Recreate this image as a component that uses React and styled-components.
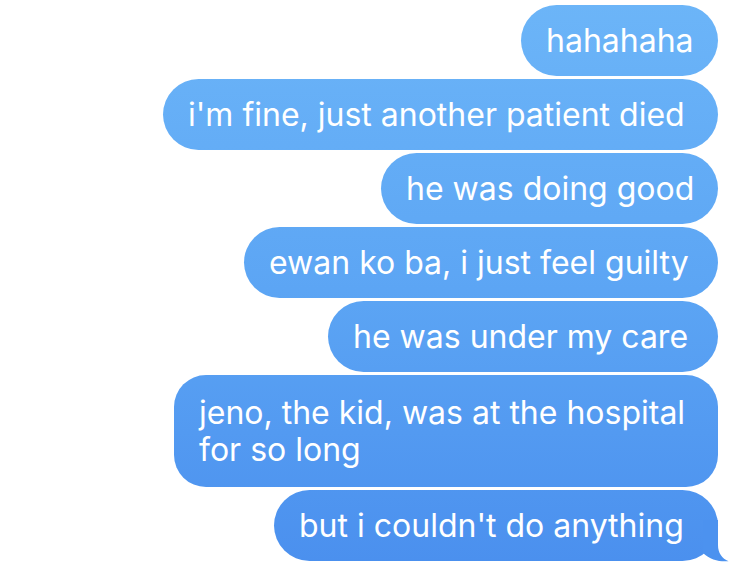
import React from 'react'
import styled, { createGlobalStyle } from 'styled-components'

const messages = [
    { id: 1, width: 197, text: 'hahahaha' },
    { id: 2, width: 555, text: "i'm fine, just another patient died" },
    { id: 3, width: 337, text: 'he was doing good' },
    { id: 4, width: 474, text: 'ewan ko ba, i just feel guilty' },
    { id: 5, width: 390, text: 'he was under my care' },
    { id: 6, width: 544, lines: ['jeno, the kid, was at the hospital', 'for so long'] },
    { id: 7, width: 444, text: "but i couldn't do anything", tail: true },
]

function Tail() {
    return (
        <TailSvg width="32" height="42" viewBox="0 0 32 42">
            <path
                d="M20 0 L20 25 C20 33 24 38.5 30.5 41.2 C22 42 12 40 5 33 L5 0 Z"
                fill="#4c92ef"
            />
        </TailSvg>
    )
}

function App() {
    return (
        <>
            <GlobalStyle />
            <Thread>
                {messages.map(msg => (
                    <Bubble key={msg.id} $w={msg.width} $multi={!!msg.lines}>
                        {msg.lines
                            ? msg.lines.map((line, i) => (
                                <React.Fragment key={i}>
                                    {i > 0 && <br />}
                                    {line}
                                </React.Fragment>
                            ))
                            : msg.text}
                        {msg.tail && <Tail />}
                    </Bubble>
                ))}
            </Thread>
        </>
    )
}

export default App

const GlobalStyle = createGlobalStyle`
    html, body {
        margin: 0;
        padding: 0;
        background: #ffffff;
    }
    body {
        width: 750px;
        height: 574px;
        overflow: hidden;
    }
`

const Thread = styled.div`
    display: flex;
    flex-direction: column;
    align-items: flex-end;
    gap: 3px;
    padding: 5px 32px 0 0;
    font-family: Inter, "Open Sans", sans-serif;
`

const Bubble = styled.div`
    position: relative;
    box-sizing: border-box;
    width: ${p => p.$w}px;
    background: linear-gradient(180deg, #6cb5f8 0px, #5ca5f4 290px, #4a8fee 574px) fixed;
    color: #ffffff;
    font-size: 32px;
    line-height: 37px;
    padding: ${p => (p.$multi ? '19px 25px' : '17px 25px')};
    border-radius: ${p => (p.$multi ? '32px' : '36px')};
    white-space: nowrap;
`

const TailSvg = styled.svg`
    position: absolute;
    right: -12px;
    bottom: -1px;
    display: block;
`
